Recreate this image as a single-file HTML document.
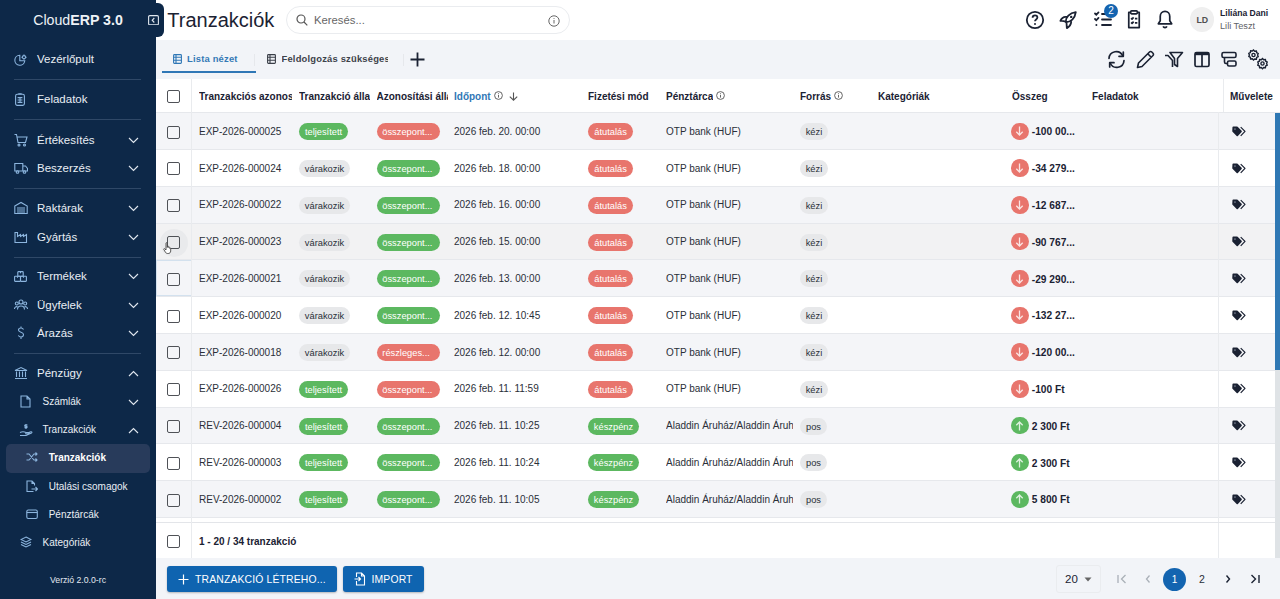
<!DOCTYPE html>
<html><head><meta charset="utf-8">
<style>
*{box-sizing:border-box;margin:0;padding:0}
html,body{width:1280px;height:599px;overflow:hidden;background:#f2f4f8;font-family:"Liberation Sans",sans-serif;color:#1b2233}
.abs{position:absolute}
#sb{position:absolute;left:0;top:0;width:156px;height:599px;background:#0d2848;color:#e9eef4}
#sb .it{position:absolute;left:0;width:156px;height:20px;line-height:20px;font-size:11.5px;white-space:nowrap}
#sb .it .tx{position:absolute;left:37px;top:0}
#sb .it svg.i{position:absolute;left:14px;top:3px}
#sb .it svg.ch{position:absolute;left:128px;top:7px}
#sb .sub{font-size:10px}
#sb .dv{position:absolute;left:14px;width:127px;height:1px;background:#2f4867}
#hdr{position:absolute;left:156px;top:0;width:1124px;height:40px;background:#ffffff}
#tabs{position:absolute;left:156px;top:40px;width:1124px;height:39px;background:#f2f4f8}
#tbl{position:absolute;left:156px;top:79px;width:1124px;height:479px;background:#fff;overflow:hidden}
.row{position:absolute;left:0;width:1124px;height:36.8px;border-bottom:1px solid #e6e8ec}
.row .c{position:absolute;top:0.5px;line-height:36px;font-size:10px;color:#2a2f38;white-space:nowrap;overflow:hidden}
.cb{position:absolute;top:12.4px;width:13px;height:13px;border:1.8px solid #4f5257;border-radius:2px}
.pill{position:absolute;top:10px;height:17px;line-height:18.6px;border-radius:9px;font-size:9.3px;text-align:center;white-space:nowrap;overflow:hidden;color:#fff;padding:0 5px;text-overflow:ellipsis}
.pg{background:#5cb860}
.pr{background:#e8756d}
.pgr{background:#e7e8ea;color:#2a2f38}
.pl{text-align:left;padding:0 4px 0 5.5px}
.amtc{position:absolute;top:9.4px;width:17.5px;height:17.5px;border-radius:50%;display:flex;align-items:center;justify-content:center}
.amt{position:absolute;top:0.2px;line-height:37px;font-size:10.2px;font-weight:bold;color:#1b2233;white-space:nowrap}
.tag{position:absolute;top:12.7px;line-height:0}
.hd{position:absolute;top:0.8px;height:33.4px;line-height:34px;font-size:10px;font-weight:bold;color:#1b2233;white-space:nowrap;overflow:hidden}
#bot{position:absolute;left:156px;top:558px;width:1124px;height:41px;background:#f2f4f8}
.btn{position:absolute;top:8.2px;height:26px;background:#0f64b0;border-radius:3px;color:#fff;font-size:10.4px;line-height:28px;letter-spacing:0.15px;white-space:nowrap;box-shadow:0 1px 2px rgba(0,0,0,.25)}
</style></head><body>

<div id="sb">
  <div class="abs" style="left:0;top:10px;width:156px;text-align:center;font-size:14.2px;line-height:20px;color:#eef2f6">Cloud<b>ERP 3.0</b></div>
  <div class="it" style="top:48.8px"><svg class="i" style="left:14px;top:5px" width="13" height="12" viewBox="0 0 13 12"><g fill="none" stroke="#8cb5de" stroke-width="1.1"><path d="M5.8 1.2A5 5 0 1 0 10.8 6.8H5.8Z"/><circle cx="10" cy="3.2" r="1.6"/><path d="M10 0.6v.9M10 4.9v.9M7.4 3.2h.9M11.7 3.2h.9"/></g></svg><span class="tx">Vezérlőpult</span></div>
  <div class="dv" style="top:79px"></div>
  <div class="it" style="top:88.8px"><svg class="i" style="left:15px;top:4.6px" width="10" height="13" viewBox="0 0 10 13"><g fill="none" stroke="#8cb5de" stroke-width="1.1"><rect x="0.6" y="1.3" width="8.8" height="11.1" rx="1.6"/><path d="M3.3 0.8h3.4M2.6 4.6h4.8M2.6 7h4.8M2.6 9.4h4.8M5 4.6v4.8"/></g></svg><span class="tx">Feladatok</span></div>
  <div class="dv" style="top:119px"></div>
  <div class="it" style="top:129.7px"><svg class="i" width="14" height="14" viewBox="0 0 14 14"><g fill="none" stroke="#8cb5de" stroke-width="1.1"><path d="M0.5 1.5h2l1.5 8h7.5l1.5-5.5H3.2"/><circle cx="5" cy="12" r="1"/><circle cx="10.5" cy="12" r="1"/></g></svg><span class="tx">Értékesítés</span><svg class="ch" width="11" height="7" viewBox="0 0 11 7"><path d="M1 1l4.5 4.5L10 1" fill="none" stroke="#dfe6ee" stroke-width="1.15"/></svg></div>
  <div class="it" style="top:158px"><svg class="i" width="14" height="14" viewBox="0 0 14 14"><g fill="none" stroke="#8cb5de" stroke-width="1.1"><path d="M0.8 2.5h8v7.5h-8z M8.8 5h2.7l2 2.5v2.5h-4.7"/><circle cx="3.5" cy="11" r="1.3"/><circle cx="10.5" cy="11" r="1.3"/></g></svg><span class="tx">Beszerzés</span><svg class="ch" width="11" height="7" viewBox="0 0 11 7"><path d="M1 1l4.5 4.5L10 1" fill="none" stroke="#dfe6ee" stroke-width="1.15"/></svg></div>
  <div class="dv" style="top:188px"></div>
  <div class="it" style="top:198px"><svg class="i" width="14" height="14" viewBox="0 0 14 14"><g fill="none" stroke="#8cb5de" stroke-width="1.1"><path d="M0.8 5L7 1.5L13.2 5V12.5H0.8Z"/><path d="M3 7h8M3 9h8M3 11h8"/></g></svg><span class="tx">Raktárak</span><svg class="ch" width="11" height="7" viewBox="0 0 11 7"><path d="M1 1l4.5 4.5L10 1" fill="none" stroke="#dfe6ee" stroke-width="1.15"/></svg></div>
  <div class="it" style="top:226.5px"><svg class="i" width="14" height="14" viewBox="0 0 14 14"><g fill="none" stroke="#8cb5de" stroke-width="1.1"><path d="M1 12.5V2.5h2.5v4l3-2v2l3-2v2l3-2v8z"/></g></svg><span class="tx">Gyártás</span><svg class="ch" width="11" height="7" viewBox="0 0 11 7"><path d="M1 1l4.5 4.5L10 1" fill="none" stroke="#dfe6ee" stroke-width="1.15"/></svg></div>
  <div class="dv" style="top:256.5px"></div>
  <div class="it" style="top:266px"><svg class="i" style="left:14px;top:5px" width="13" height="11" viewBox="0 0 13 11"><g fill="none" stroke="#8cb5de" stroke-width="1.1"><rect x="3.8" y="0.6" width="5.4" height="4.6" rx="0.6"/><rect x="0.6" y="5.2" width="5.9" height="5.2" rx="0.6"/><rect x="6.5" y="5.2" width="5.9" height="5.2" rx="0.6"/><path d="M6.5 0.6v1.6M3.5 5.2v1.6M9.5 5.2v1.6"/></g></svg><span class="tx">Termékek</span><svg class="ch" width="11" height="7" viewBox="0 0 11 7"><path d="M1 1l4.5 4.5L10 1" fill="none" stroke="#dfe6ee" stroke-width="1.15"/></svg></div>
  <div class="it" style="top:294.5px"><svg class="i" width="14" height="14" viewBox="0 0 14 14"><g fill="none" stroke="#8cb5de" stroke-width="1.1"><circle cx="7" cy="4" r="2"/><circle cx="2.8" cy="5.5" r="1.5"/><circle cx="11.2" cy="5.5" r="1.5"/><path d="M3.5 11.5a3.5 3.5 0 0 1 7 0M0.5 11a2.3 2.3 0 0 1 3-2.3M13.5 11a2.3 2.3 0 0 0-3-2.3"/></g></svg><span class="tx">Ügyfelek</span><svg class="ch" width="11" height="7" viewBox="0 0 11 7"><path d="M1 1l4.5 4.5L10 1" fill="none" stroke="#dfe6ee" stroke-width="1.15"/></svg></div>
  <div class="it" style="top:323px"><svg class="i" width="14" height="14" viewBox="0 0 14 14"><g fill="none" stroke="#8cb5de" stroke-width="1.1"><path d="M9.5 3.5C9 2.5 8 2 7 2 5.5 2 4.5 2.8 4.5 4s1 1.7 2.5 2.2 2.5 1 2.5 2.3S8.5 11 7 11c-1.2 0-2.2-.6-2.6-1.6M7 0.5v1.5M7 11v2"/></g></svg><span class="tx">Árazás</span><svg class="ch" width="11" height="7" viewBox="0 0 11 7"><path d="M1 1l4.5 4.5L10 1" fill="none" stroke="#dfe6ee" stroke-width="1.15"/></svg></div>
  <div class="dv" style="top:353px"></div>
  <div class="it" style="top:362.5px"><svg class="i" width="14" height="14" viewBox="0 0 14 14"><g fill="none" stroke="#8cb5de" stroke-width="1.1"><path d="M1 4.5L7 1.5L13 4.5H1z M2.5 5.5v5.5 M5.5 5.5v5.5 M8.5 5.5v5.5 M11.5 5.5v5.5 M1 12.5h12"/></g></svg><span class="tx">Pénzügy</span><svg class="ch" width="11" height="7" viewBox="0 0 11 7"><path d="M1 6l4.5-4.5L10 6" fill="none" stroke="#dfe6ee" stroke-width="1.15"/></svg></div>
  <div class="it sub" style="top:391.5px"><svg class="i" style="left:20px" width="11" height="13" viewBox="0 0 11 13"><g fill="none" stroke="#8cb5de" stroke-width="1.1"><path d="M1 1h6l3 3v8H1z M7 1v3h3"/></g></svg><span class="tx" style="left:42.5px">Számlák</span><svg class="ch" width="11" height="7" viewBox="0 0 11 7"><path d="M1 1l4.5 4.5L10 1" fill="none" stroke="#dfe6ee" stroke-width="1.15"/></svg></div>
  <div class="it sub" style="top:419.5px"><svg class="i" style="left:19px" width="14" height="14" viewBox="0 0 14 14"><g fill="none" stroke="#8cb5de" stroke-width="1.1"><path d="M1 9.5c2-1 4-1 6 0h2.5c1 0 1 1.2 0 1.2H6 M1 12.5h6l5.5-2.5c.8-.5.3-1.5-.6-1.2L9 9.8 M7 1v5 M8.5 2H6.3c-.8 0-.8 1.3 0 1.3h1.2c.8 0 .8 1.3 0 1.3H5.5"/></g></svg><span class="tx" style="left:42.5px">Tranzakciók</span><svg class="ch" width="11" height="7" viewBox="0 0 11 7"><path d="M1 6l4.5-4.5L10 6" fill="none" stroke="#dfe6ee" stroke-width="1.15"/></svg></div>
  <div class="abs" style="left:6px;top:444px;width:144px;height:28.5px;background:#283b5b;border-radius:5px"></div>
  <div class="it sub" style="top:447.5px"><svg class="i" style="left:26px" width="12" height="12" viewBox="0 0 12 12"><g fill="none" stroke="#8cb5de" stroke-width="1.1"><path d="M0.5 3h2.5l5 6h3 M0.5 9h2.5l5-6h3 M9.5 1.5l1.5 1.5-1.5 1.5 M9.5 7.5l1.5 1.5-1.5 1.5"/></g></svg><span class="tx" style="left:48.7px;font-weight:bold;color:#fff">Tranzakciók</span></div>
  <div class="it sub" style="top:477.2px"><svg class="i" style="left:26px" width="12" height="13" viewBox="0 0 12 13"><g fill="none" stroke="#8cb5de" stroke-width="1.1"><path d="M7.5 11.5H1V1h5l2.5 2.5v2 M6 1v2.5h2.5 M5.5 9h6 M9.5 7l2 2-2 2"/></g></svg><span class="tx" style="left:48.7px">Utalási csomagok</span></div>
  <div class="it sub" style="top:505.3px"><svg class="i" style="left:26px" width="12" height="12" viewBox="0 0 12 12"><g fill="none" stroke="#8cb5de" stroke-width="1.1"><rect x="0.8" y="2" width="10.5" height="8.5" rx="1.5"/><path d="M0.8 4.5h10.5"/></g></svg><span class="tx" style="left:48.7px">Pénztárcák</span></div>
  <div class="it sub" style="top:533px"><svg class="i" style="left:20px" width="12" height="12" viewBox="0 0 12 12"><g fill="none" stroke="#8cb5de" stroke-width="1.1"><path d="M6 1L11 3.5L6 6L1 3.5Z M1 6l5 2.5L11 6 M1 8.5l5 2.5 5-2.5"/></g></svg><span class="tx" style="left:42.5px">Kategóriák</span></div>
  <div class="abs" style="left:0;top:573.5px;width:156px;text-align:center;font-size:8.7px;line-height:12px;color:#e4eaf1">Verzió 2.0.0-rc</div>
</div>

<!-- collapse tab -->
<div class="abs" style="left:140px;top:3px;width:24px;height:33.6px;background:#0d2848;border-radius:0 6px 6px 0;z-index:5"></div>
<svg class="abs" style="z-index:6;left:148px;top:14.5px" width="11" height="10.5" viewBox="0 0 11 10.5"><g fill="none" stroke="#dfe6ee" stroke-width="1.1"><rect x="0.6" y="0.6" width="9.8" height="9.3" rx="1.2"/><path d="M6.3 3L4.2 5.25 6.3 7.5"/></g></svg>

<div id="hdr">
  <div class="abs" style="left:11.3px;top:7.6px;font-size:20px;line-height:24px;color:#1b2233">Tranzakciók</div>
  <div class="abs" style="left:130px;top:6px;width:284px;height:28px;border:1px solid #eaecef;border-radius:14px;background:#fff"></div>
  <svg class="abs" style="left:140px;top:14px" width="12" height="12" viewBox="0 0 12 12"><g fill="none" stroke="#555" stroke-width="1.2"><circle cx="5" cy="5" r="4"/><path d="M8 8l3.3 3.3"/></g></svg>
  <div class="abs" style="left:158px;top:13px;font-size:11.3px;line-height:14px;color:#666">Keresés...</div>
  <svg class="abs" style="left:392px;top:14.7px" width="12" height="12" viewBox="0 0 12 12"><g fill="none" stroke="#666" stroke-width="1"><circle cx="6" cy="6" r="5.2"/><path d="M6 5v3.5M6 3.2v.8"/></g></svg>

  <!-- header right icons (page x - 156) -->
  <svg class="abs" style="left:869px;top:10px" width="20" height="20" viewBox="0 0 20 20"><g fill="none" stroke="#1b2233" stroke-width="1.8"><circle cx="10" cy="10" r="8.2"/><path d="M7.6 7.8c0-1.5 1.1-2.4 2.4-2.4s2.4.9 2.4 2.2c0 1.8-2.4 1.9-2.4 3.6"/></g><circle cx="10" cy="14" r="1" fill="#1b2233"/></svg>
  <svg class="abs" style="left:902px;top:10px" width="20" height="20" viewBox="0 0 20 20"><g fill="none" stroke="#1b2233" stroke-width="1.8" stroke-linejoin="round" stroke-linecap="round"><path d="M7.8 11.8C7.5 7.5 11.5 3 17.8 2.2 17 8.5 12.5 12.2 8.2 12.2Z"/><path d="M8.6 6.9C6 6.5 3.6 8 2.4 10.9 4.2 10.6 6 10.9 7.6 11.6"/><path d="M8.4 12.4C8.8 14.4 8.6 16.4 8.9 18.2 11.5 16.6 13 14.6 13.2 11.9"/></g><circle cx="13.2" cy="6.9" r="1.2" fill="#1b2233"/></svg>
  <svg class="abs" style="left:936.7px;top:9.3px" width="20" height="20" viewBox="0 0 20 20"><g fill="none" stroke="#1b2233" stroke-width="1.8" stroke-linecap="round"><path d="M2 4.5l1.3 1.3 2.2-2.4 M2 10l1.3 1.3 2.2-2.4"/><path d="M9 5h9 M9 10.5h9 M9 16h9"/></g><circle cx="3.4" cy="16" r="1" fill="#1b2233"/></svg>
  <div class="abs" style="left:948px;top:4.3px;width:14px;height:14px;border-radius:50%;background:#1464b0;color:#fff;font-size:10px;line-height:14px;text-align:center">2</div>
  <svg class="abs" style="left:968px;top:10px" width="20" height="20" viewBox="0 1 20 21"><g fill="none" stroke="#1b2233" stroke-width="1.8" stroke-linejoin="round"><path d="M6.5 3.5H4.5v16h11v-16h-2"/><rect x="6.5" y="2" width="7" height="3" rx="1"/><path d="M7 9.5l1 1 1.6-1.8 M7 14l1 1 1.6-1.8 M11 10h2.5 M11 14.5h2.5"/></g></svg>
  <svg class="abs" style="left:999px;top:10px" width="20" height="20" viewBox="0 1 20 21"><g fill="none" stroke="#1b2233" stroke-width="1.8" stroke-linejoin="round"><path d="M10 2.5c-3 0-5 2.3-5 5.3v4.5L3 15.5h14l-2-3.2V7.8c0-3-2-5.3-5-5.3z M8 18.2c.4.9 1.1 1.3 2 1.3s1.6-.4 2-1.3"/></g></svg>
  <div class="abs" style="left:1034.2px;top:7.4px;width:24.3px;height:24.3px;border-radius:50%;background:#efefef;color:#505050;font-size:8.8px;font-weight:bold;line-height:26.5px;text-align:center">LD</div>
  <div class="abs" style="left:1064px;top:6.5px;font-size:8.6px;font-weight:bold;line-height:12px;color:#1b2233;white-space:nowrap">Liliána Dani</div>
  <div class="abs" style="left:1064px;top:19.5px;font-size:9.2px;line-height:12px;color:#5f6368;white-space:nowrap">Lili Teszt</div>
</div>

<div id="tabs">
  <svg class="abs" style="left:17px;top:14px" width="9" height="10" viewBox="0 0 9 10"><g fill="none" stroke="#2f77b6" stroke-width="1.1"><rect x="0.6" y="0.6" width="7.8" height="8.8" rx="0.8"/><path d="M0.6 3.3h7.8M0.6 6.2h7.8M3 0.6v8.8"/></g></svg>
  <div class="abs" style="left:31px;top:12.3px;font-size:9.4px;letter-spacing:0.2px;font-weight:bold;line-height:14px;color:#3479b6;white-space:nowrap">Lista nézet</div>
  <div class="abs" style="left:5.5px;top:31px;width:94.5px;height:2px;background:#2f77b6"></div>
  <div class="abs" style="left:97.8px;top:14px;width:1px;height:11.5px;background:#e6e8ec"></div>
  <svg class="abs" style="left:111px;top:14px" width="9" height="10" viewBox="0 0 9 10"><g fill="none" stroke="#3a3f48" stroke-width="1.1"><rect x="0.6" y="0.6" width="7.8" height="8.8" rx="0.8"/><path d="M0.6 3.3h7.8M0.6 6.2h7.8M3 0.6v8.8"/></g></svg>
  <div class="abs" style="left:125.5px;top:12.3px;width:106.5px;overflow:hidden;font-size:9.4px;letter-spacing:0.2px;font-weight:bold;line-height:14px;color:#3d424a;white-space:nowrap">Feldolgozás szükséges</div>
  <div class="abs" style="left:247px;top:14px;width:1px;height:11.5px;background:#e6e8ec"></div>
  <svg class="abs" style="left:254px;top:12px" width="15" height="15" viewBox="0 0 15 15"><path d="M7.5 0.5v14M0.5 7.5h14" fill="none" stroke="#1b2233" stroke-width="1.8"/></svg>
  <!-- toolbar icons -->
  <svg class="abs" style="left:951px;top:10px" width="19" height="19" viewBox="0 0 19 19"><g fill="none" stroke="#1b2233" stroke-width="1.7" stroke-linecap="round" stroke-linejoin="round"><path d="M2 8.5A7.2 7.2 0 0 1 15.8 6 M17 10.5A7.2 7.2 0 0 1 3.2 13"/><path d="M16.3 2v4.3H12 M2.7 17v-4.3H7"/></g></svg>
  <svg class="abs" style="left:980px;top:10px" width="19" height="19" viewBox="0 0 19 19"><g fill="none" stroke="#1b2233" stroke-width="1.6" stroke-linejoin="round"><path d="M1.5 17.5l1-4.5L13.5 2a1.6 1.6 0 0 1 2.3 0l1.2 1.2a1.6 1.6 0 0 1 0 2.3L6 16.5z M11.8 3.8l3.4 3.4"/></g></svg>
  <svg class="abs" style="left:1008px;top:10px" width="20" height="19" viewBox="0 0 20 19"><g fill="none" stroke="#1b2233" stroke-width="1.6" stroke-linejoin="round"><path d="M6 2.5h12.5l-5 6v8l-3-2V8.5L6 2.5z"/><path d="M1 5.5h3l4.5 5v6.5"/></g></svg>
  <svg class="abs" style="left:1038px;top:11px" width="16" height="17" viewBox="0 0 16 17"><g fill="none" stroke="#1b2233" stroke-width="1.7"><rect x="1" y="1.5" width="14" height="14" rx="1.5"/><path d="M8 4v11.5"/></g><rect x="1" y="1.5" width="14" height="2.7" fill="#1b2233"/></svg>
  <svg class="abs" style="left:1065px;top:11px" width="16" height="17" viewBox="0 0 16 17"><g fill="none" stroke="#1b2233" stroke-width="1.6" stroke-linejoin="round"><rect x="1" y="1.5" width="14" height="5" rx="1.5"/><rect x="6.5" y="10" width="8.5" height="5" rx="1.5"/><path d="M3.5 6.5v4.5c0 .8.5 1.5 1.5 1.5h1.5"/></g></svg>
  <svg class="abs" style="left:1092px;top:9px" width="21" height="21" viewBox="0 0 21 21"><g fill="none" stroke="#1b2233" stroke-width="1.4"><path d="M5.5 1l1.2 1.2 1.7-.2.3 1.7 1.5.8-.6 1.6.6 1.6-1.5.8-.3 1.7-1.7-.2L5.5 11l-1.2-1.2-1.7.2-.3-1.7L.8 7.5l.6-1.6L.8 4.3l1.5-.8.3-1.7 1.7.2z"/><circle cx="5.5" cy="6" r="1.6"/><path d="M14.5 9.5l1.2 1.2 1.7-.2.3 1.7 1.5.8-.6 1.6.6 1.6-1.5.8-.3 1.7-1.7-.2-1.2 1.2-1.2-1.2-1.7.2-.3-1.7-1.5-.8.6-1.6-.6-1.6 1.5-.8.3-1.7 1.7.2z"/><circle cx="14.5" cy="14.5" r="1.6"/></g></svg>
</div>

<div id="tbl">
  <div class="abs" style="left:0;top:0;width:1124px;height:34.2px;background:#fff;border-bottom:1px solid #e6e8ec"></div>
  <span class="cb" style="left:11px;top:10.5px"></span>
    <div class="hd" style="left:43px;width:93px">Tranzakciós azonosító</div>
  <div class="hd" style="left:143px;width:71px">Tranzakció állapot</div>
  <div class="hd" style="left:220.5px;width:71px">Azonosítási állapot</div>
  <div class="hd" style="left:298px;color:#2f77b6">Időpont</div>
  <svg class="abs" style="left:338px;top:12px" width="9" height="9" viewBox="0 0 9 9"><g fill="none" stroke="#555" stroke-width="0.9"><circle cx="4.5" cy="4.5" r="3.9"/><path d="M4.5 3.8v2.8M4.5 2.3v.7"/></g></svg>
  <svg class="abs" style="left:352.5px;top:12.5px" width="9" height="9" viewBox="0 0 9 9"><path d="M4.5 0.5v7.6M0.8 4.6l3.7 3.6 3.7-3.6" fill="none" stroke="#555" stroke-width="1.1"/></svg>
  <div class="hd" style="left:432px">Fizetési mód</div>
  <div class="hd" style="left:510px">Pénztárca</div>
  <svg class="abs" style="left:560px;top:12px" width="9" height="9" viewBox="0 0 9 9"><g fill="none" stroke="#555" stroke-width="0.9"><circle cx="4.5" cy="4.5" r="3.9"/><path d="M4.5 3.8v2.8M4.5 2.3v.7"/></g></svg>
  <div class="hd" style="left:644px">Forrás</div>
  <svg class="abs" style="left:678px;top:12px" width="9" height="9" viewBox="0 0 9 9"><g fill="none" stroke="#555" stroke-width="0.9"><circle cx="4.5" cy="4.5" r="3.9"/><path d="M4.5 3.8v2.8M4.5 2.3v.7"/></g></svg>
  <div class="hd" style="left:722px">Kategóriák</div>
  <div class="hd" style="left:856px">Összeg</div>
  <div class="hd" style="left:936px">Feladatok</div>
  <div class="abs" style="left:1066.5px;top:0;width:1px;height:33.4px;background:#e9ebee"></div>
  <div class="hd" style="left:1074px;width:43px">Műveletek</div>
  <div class="row" style="top:34.20px;background:#f4f5f8"><span class="cb" style="left:11px"></span><span class="c" style="left:43px;width:93px">EXP-2026-000025</span><span class="pill pg" style="left:143px;width:49px">teljesített</span><span class="pill pr pl" style="left:220.8px;width:63.6px">összepont...</span><span class="c" style="left:298px;width:127px">2026 feb. 20. 00:00</span><span class="pill pr" style="left:432px;width:45px">átutalás</span><span class="c" style="left:510px;width:127px">OTP bank (HUF)</span><span class="pill pgr" style="left:644px;width:28px">kézi</span><span class="amtc" style="left:855px;background:#e8756d"><svg width="9" height="10" viewBox="0 0 9 10"><path d="M4.5 0.5V9M1.3 5.8L4.5 9L7.7 5.8" fill="none" stroke="#fff" stroke-opacity="0.8" stroke-width="1.3"/></svg></span><span class="amt" style="left:875.8px">-100 00...</span><span class="tag" style="left:1076px"><svg width="15" height="12" viewBox="0 0 15 12"><path d="M1.3 1.3H5L9 5.4 5.25 9.3 1.1 5.2Z" fill="#1b2233" stroke="#1b2233" stroke-width="1.7" stroke-linejoin="round"/><rect x="2.1" y="2.6" width="1.7" height="0.9" fill="#9aa3b3"/><path d="M8.7 1.1L13 5.4 8.7 9.9" fill="none" stroke="#1b2233" stroke-width="1.2" stroke-linejoin="round"/></svg></span></div>
<div class="row" style="top:71.00px;background:#ffffff"><span class="cb" style="left:11px"></span><span class="c" style="left:43px;width:93px">EXP-2026-000024</span><span class="pill pgr" style="left:143px;width:51px">várakozik</span><span class="pill pg pl" style="left:220.8px;width:63.6px">összepont...</span><span class="c" style="left:298px;width:127px">2026 feb. 18. 00:00</span><span class="pill pr" style="left:432px;width:45px">átutalás</span><span class="c" style="left:510px;width:127px">OTP bank (HUF)</span><span class="pill pgr" style="left:644px;width:28px">kézi</span><span class="amtc" style="left:855px;background:#e8756d"><svg width="9" height="10" viewBox="0 0 9 10"><path d="M4.5 0.5V9M1.3 5.8L4.5 9L7.7 5.8" fill="none" stroke="#fff" stroke-opacity="0.8" stroke-width="1.3"/></svg></span><span class="amt" style="left:875.8px">-34 279...</span><span class="tag" style="left:1076px"><svg width="15" height="12" viewBox="0 0 15 12"><path d="M1.3 1.3H5L9 5.4 5.25 9.3 1.1 5.2Z" fill="#1b2233" stroke="#1b2233" stroke-width="1.7" stroke-linejoin="round"/><rect x="2.1" y="2.6" width="1.7" height="0.9" fill="#9aa3b3"/><path d="M8.7 1.1L13 5.4 8.7 9.9" fill="none" stroke="#1b2233" stroke-width="1.2" stroke-linejoin="round"/></svg></span></div>
<div class="row" style="top:107.80px;background:#f4f5f8"><span class="cb" style="left:11px"></span><span class="c" style="left:43px;width:93px">EXP-2026-000022</span><span class="pill pgr" style="left:143px;width:51px">várakozik</span><span class="pill pg pl" style="left:220.8px;width:63.6px">összepont...</span><span class="c" style="left:298px;width:127px">2026 feb. 16. 00:00</span><span class="pill pr" style="left:432px;width:45px">átutalás</span><span class="c" style="left:510px;width:127px">OTP bank (HUF)</span><span class="pill pgr" style="left:644px;width:28px">kézi</span><span class="amtc" style="left:855px;background:#e8756d"><svg width="9" height="10" viewBox="0 0 9 10"><path d="M4.5 0.5V9M1.3 5.8L4.5 9L7.7 5.8" fill="none" stroke="#fff" stroke-opacity="0.8" stroke-width="1.3"/></svg></span><span class="amt" style="left:875.8px">-12 687...</span><span class="tag" style="left:1076px"><svg width="15" height="12" viewBox="0 0 15 12"><path d="M1.3 1.3H5L9 5.4 5.25 9.3 1.1 5.2Z" fill="#1b2233" stroke="#1b2233" stroke-width="1.7" stroke-linejoin="round"/><rect x="2.1" y="2.6" width="1.7" height="0.9" fill="#9aa3b3"/><path d="M8.7 1.1L13 5.4 8.7 9.9" fill="none" stroke="#1b2233" stroke-width="1.2" stroke-linejoin="round"/></svg></span></div>
<div class="row" style="top:144.60px;background:#f2f2f3"><span style="position:absolute;left:4px;top:5px;width:28px;height:28px;border-radius:50%;background:#e9eaec"></span><span class="cb" style="left:11px"></span><svg style="position:absolute;left:6.5px;top:18.5px" width="10" height="12" viewBox="0 0 10 12"><path d="M3 1.2c0-.7 1.2-.7 1.2 0V5.5l.3-1c.2-.6 1.1-.5 1.1.1v.9c.2-.6 1.1-.5 1.1.1v.8c.2-.5 1-.4 1 .2V9c0 1.5-1 2.5-2.5 2.5H4.5C3.5 11.5 3 11 2.5 10.3L.8 7.5c-.4-.6.4-1.2.9-.7L3 8z" fill="#fff" stroke="#333" stroke-width="0.8" stroke-linejoin="round"/></svg><span class="c" style="left:43px;width:93px">EXP-2026-000023</span><span class="pill pgr" style="left:143px;width:51px">várakozik</span><span class="pill pg pl" style="left:220.8px;width:63.6px">összepont...</span><span class="c" style="left:298px;width:127px">2026 feb. 15. 00:00</span><span class="pill pr" style="left:432px;width:45px">átutalás</span><span class="c" style="left:510px;width:127px">OTP bank (HUF)</span><span class="pill pgr" style="left:644px;width:28px">kézi</span><span class="amtc" style="left:855px;background:#e8756d"><svg width="9" height="10" viewBox="0 0 9 10"><path d="M4.5 0.5V9M1.3 5.8L4.5 9L7.7 5.8" fill="none" stroke="#fff" stroke-opacity="0.8" stroke-width="1.3"/></svg></span><span class="amt" style="left:875.8px">-90 767...</span><span class="tag" style="left:1076px"><svg width="15" height="12" viewBox="0 0 15 12"><path d="M1.3 1.3H5L9 5.4 5.25 9.3 1.1 5.2Z" fill="#1b2233" stroke="#1b2233" stroke-width="1.7" stroke-linejoin="round"/><rect x="2.1" y="2.6" width="1.7" height="0.9" fill="#9aa3b3"/><path d="M8.7 1.1L13 5.4 8.7 9.9" fill="none" stroke="#1b2233" stroke-width="1.2" stroke-linejoin="round"/></svg></span></div>
<div class="row" style="top:181.40px;background:#f4f5f8"><span style="position:absolute;left:0;top:0;width:35.5px;height:36px;border:1px solid #d3e1ee"></span><span class="cb" style="left:11px"></span><span class="c" style="left:43px;width:93px">EXP-2026-000021</span><span class="pill pgr" style="left:143px;width:51px">várakozik</span><span class="pill pg pl" style="left:220.8px;width:63.6px">összepont...</span><span class="c" style="left:298px;width:127px">2026 feb. 13. 00:00</span><span class="pill pr" style="left:432px;width:45px">átutalás</span><span class="c" style="left:510px;width:127px">OTP bank (HUF)</span><span class="pill pgr" style="left:644px;width:28px">kézi</span><span class="amtc" style="left:855px;background:#e8756d"><svg width="9" height="10" viewBox="0 0 9 10"><path d="M4.5 0.5V9M1.3 5.8L4.5 9L7.7 5.8" fill="none" stroke="#fff" stroke-opacity="0.8" stroke-width="1.3"/></svg></span><span class="amt" style="left:875.8px">-29 290...</span><span class="tag" style="left:1076px"><svg width="15" height="12" viewBox="0 0 15 12"><path d="M1.3 1.3H5L9 5.4 5.25 9.3 1.1 5.2Z" fill="#1b2233" stroke="#1b2233" stroke-width="1.7" stroke-linejoin="round"/><rect x="2.1" y="2.6" width="1.7" height="0.9" fill="#9aa3b3"/><path d="M8.7 1.1L13 5.4 8.7 9.9" fill="none" stroke="#1b2233" stroke-width="1.2" stroke-linejoin="round"/></svg></span></div>
<div class="row" style="top:218.20px;background:#ffffff"><span class="cb" style="left:11px"></span><span class="c" style="left:43px;width:93px">EXP-2026-000020</span><span class="pill pgr" style="left:143px;width:51px">várakozik</span><span class="pill pg pl" style="left:220.8px;width:63.6px">összepont...</span><span class="c" style="left:298px;width:127px">2026 feb. 12. 10:45</span><span class="pill pr" style="left:432px;width:45px">átutalás</span><span class="c" style="left:510px;width:127px">OTP bank (HUF)</span><span class="pill pgr" style="left:644px;width:28px">kézi</span><span class="amtc" style="left:855px;background:#e8756d"><svg width="9" height="10" viewBox="0 0 9 10"><path d="M4.5 0.5V9M1.3 5.8L4.5 9L7.7 5.8" fill="none" stroke="#fff" stroke-opacity="0.8" stroke-width="1.3"/></svg></span><span class="amt" style="left:875.8px">-132 27...</span><span class="tag" style="left:1076px"><svg width="15" height="12" viewBox="0 0 15 12"><path d="M1.3 1.3H5L9 5.4 5.25 9.3 1.1 5.2Z" fill="#1b2233" stroke="#1b2233" stroke-width="1.7" stroke-linejoin="round"/><rect x="2.1" y="2.6" width="1.7" height="0.9" fill="#9aa3b3"/><path d="M8.7 1.1L13 5.4 8.7 9.9" fill="none" stroke="#1b2233" stroke-width="1.2" stroke-linejoin="round"/></svg></span></div>
<div class="row" style="top:255.00px;background:#f4f5f8"><span class="cb" style="left:11px"></span><span class="c" style="left:43px;width:93px">EXP-2026-000018</span><span class="pill pgr" style="left:143px;width:51px">várakozik</span><span class="pill pr pl" style="left:220.8px;width:63.6px">részleges...</span><span class="c" style="left:298px;width:127px">2026 feb. 12. 00:00</span><span class="pill pr" style="left:432px;width:45px">átutalás</span><span class="c" style="left:510px;width:127px">OTP bank (HUF)</span><span class="pill pgr" style="left:644px;width:28px">kézi</span><span class="amtc" style="left:855px;background:#e8756d"><svg width="9" height="10" viewBox="0 0 9 10"><path d="M4.5 0.5V9M1.3 5.8L4.5 9L7.7 5.8" fill="none" stroke="#fff" stroke-opacity="0.8" stroke-width="1.3"/></svg></span><span class="amt" style="left:875.8px">-120 00...</span><span class="tag" style="left:1076px"><svg width="15" height="12" viewBox="0 0 15 12"><path d="M1.3 1.3H5L9 5.4 5.25 9.3 1.1 5.2Z" fill="#1b2233" stroke="#1b2233" stroke-width="1.7" stroke-linejoin="round"/><rect x="2.1" y="2.6" width="1.7" height="0.9" fill="#9aa3b3"/><path d="M8.7 1.1L13 5.4 8.7 9.9" fill="none" stroke="#1b2233" stroke-width="1.2" stroke-linejoin="round"/></svg></span></div>
<div class="row" style="top:291.80px;background:#ffffff"><span class="cb" style="left:11px"></span><span class="c" style="left:43px;width:93px">EXP-2026-000026</span><span class="pill pg" style="left:143px;width:49px">teljesített</span><span class="pill pr pl" style="left:220.8px;width:63.6px">összepont...</span><span class="c" style="left:298px;width:127px">2026 feb. 11. 11:59</span><span class="pill pr" style="left:432px;width:45px">átutalás</span><span class="c" style="left:510px;width:127px">OTP bank (HUF)</span><span class="pill pgr" style="left:644px;width:28px">kézi</span><span class="amtc" style="left:855px;background:#e8756d"><svg width="9" height="10" viewBox="0 0 9 10"><path d="M4.5 0.5V9M1.3 5.8L4.5 9L7.7 5.8" fill="none" stroke="#fff" stroke-opacity="0.8" stroke-width="1.3"/></svg></span><span class="amt" style="left:875.8px">-100 Ft</span><span class="tag" style="left:1076px"><svg width="15" height="12" viewBox="0 0 15 12"><path d="M1.3 1.3H5L9 5.4 5.25 9.3 1.1 5.2Z" fill="#1b2233" stroke="#1b2233" stroke-width="1.7" stroke-linejoin="round"/><rect x="2.1" y="2.6" width="1.7" height="0.9" fill="#9aa3b3"/><path d="M8.7 1.1L13 5.4 8.7 9.9" fill="none" stroke="#1b2233" stroke-width="1.2" stroke-linejoin="round"/></svg></span></div>
<div class="row" style="top:328.60px;background:#f4f5f8"><span class="cb" style="left:11px"></span><span class="c" style="left:43px;width:93px">REV-2026-000004</span><span class="pill pg" style="left:143px;width:49px">teljesített</span><span class="pill pg pl" style="left:220.8px;width:63.6px">összepont...</span><span class="c" style="left:298px;width:127px">2026 feb. 11. 10:25</span><span class="pill pg" style="left:432px;width:51px">készpénz</span><span class="c" style="left:510px;width:127px">Aladdin Áruház/Aladdin Áruház</span><span class="pill pgr" style="left:644px;width:27px">pos</span><span class="amtc" style="left:855px;background:#5cb860"><svg width="9" height="10" viewBox="0 0 9 10"><path d="M4.5 9.5V1M1.3 4.2L4.5 1L7.7 4.2" fill="none" stroke="#fff" stroke-opacity="0.8" stroke-width="1.3"/></svg></span><span class="amt" style="left:875.8px">2 300 Ft</span><span class="tag" style="left:1076px"><svg width="15" height="12" viewBox="0 0 15 12"><path d="M1.3 1.3H5L9 5.4 5.25 9.3 1.1 5.2Z" fill="#1b2233" stroke="#1b2233" stroke-width="1.7" stroke-linejoin="round"/><rect x="2.1" y="2.6" width="1.7" height="0.9" fill="#9aa3b3"/><path d="M8.7 1.1L13 5.4 8.7 9.9" fill="none" stroke="#1b2233" stroke-width="1.2" stroke-linejoin="round"/></svg></span></div>
<div class="row" style="top:365.40px;background:#ffffff"><span class="cb" style="left:11px"></span><span class="c" style="left:43px;width:93px">REV-2026-000003</span><span class="pill pg" style="left:143px;width:49px">teljesített</span><span class="pill pg pl" style="left:220.8px;width:63.6px">összepont...</span><span class="c" style="left:298px;width:127px">2026 feb. 11. 10:24</span><span class="pill pg" style="left:432px;width:51px">készpénz</span><span class="c" style="left:510px;width:127px">Aladdin Áruház/Aladdin Áruház</span><span class="pill pgr" style="left:644px;width:27px">pos</span><span class="amtc" style="left:855px;background:#5cb860"><svg width="9" height="10" viewBox="0 0 9 10"><path d="M4.5 9.5V1M1.3 4.2L4.5 1L7.7 4.2" fill="none" stroke="#fff" stroke-opacity="0.8" stroke-width="1.3"/></svg></span><span class="amt" style="left:875.8px">2 300 Ft</span><span class="tag" style="left:1076px"><svg width="15" height="12" viewBox="0 0 15 12"><path d="M1.3 1.3H5L9 5.4 5.25 9.3 1.1 5.2Z" fill="#1b2233" stroke="#1b2233" stroke-width="1.7" stroke-linejoin="round"/><rect x="2.1" y="2.6" width="1.7" height="0.9" fill="#9aa3b3"/><path d="M8.7 1.1L13 5.4 8.7 9.9" fill="none" stroke="#1b2233" stroke-width="1.2" stroke-linejoin="round"/></svg></span></div>
<div class="row" style="top:402.20px;background:#f4f5f8"><span class="cb" style="left:11px"></span><span class="c" style="left:43px;width:93px">REV-2026-000002</span><span class="pill pg" style="left:143px;width:49px">teljesített</span><span class="pill pg pl" style="left:220.8px;width:63.6px">összepont...</span><span class="c" style="left:298px;width:127px">2026 feb. 11. 10:05</span><span class="pill pg" style="left:432px;width:51px">készpénz</span><span class="c" style="left:510px;width:127px">Aladdin Áruház/Aladdin Áruház</span><span class="pill pgr" style="left:644px;width:27px">pos</span><span class="amtc" style="left:855px;background:#5cb860"><svg width="9" height="10" viewBox="0 0 9 10"><path d="M4.5 9.5V1M1.3 4.2L4.5 1L7.7 4.2" fill="none" stroke="#fff" stroke-opacity="0.8" stroke-width="1.3"/></svg></span><span class="amt" style="left:875.8px">5 800 Ft</span><span class="tag" style="left:1076px"><svg width="15" height="12" viewBox="0 0 15 12"><path d="M1.3 1.3H5L9 5.4 5.25 9.3 1.1 5.2Z" fill="#1b2233" stroke="#1b2233" stroke-width="1.7" stroke-linejoin="round"/><rect x="2.1" y="2.6" width="1.7" height="0.9" fill="#9aa3b3"/><path d="M8.7 1.1L13 5.4 8.7 9.9" fill="none" stroke="#1b2233" stroke-width="1.2" stroke-linejoin="round"/></svg></span></div>
  <div class="abs" style="left:0;top:439px;width:1124px;height:5px;background:#fff;border-bottom:1px solid #e3e5e9"></div>
  <div class="abs" style="left:0;top:444px;width:1124px;height:35px;background:#fff"></div>
  <div class="abs" style="left:35px;top:0;width:1px;height:479px;background:#e9ebee"></div>
  <span class="cb" style="left:11px;top:455.5px"></span>
  <div class="abs" style="left:43px;top:455.5px;font-size:10px;font-weight:bold;line-height:14px;color:#1b2233;white-space:nowrap">1 - 20 / 34 tranzakció</div>
  <div class="abs" style="left:1062px;top:33.4px;width:1px;height:410px;background:#e9ebee"></div>
  <div class="abs" style="left:1062px;top:444px;width:1px;height:35px;background:#e9ebee"></div>
  <div class="abs" style="left:1119px;top:34.4px;width:5px;height:257px;background:#2f78b4"></div>
  <div class="abs" style="left:1119px;top:291px;width:5px;height:188px;background:#dfe3e6"></div>
</div>

<div id="bot">
  <div class="btn" style="left:11px;width:170px"><svg class="abs" style="left:11px;top:7.5px" width="11" height="11" viewBox="0 0 11 11"><path d="M5.5 0.5v10M0.5 5.5h10" fill="none" stroke="#fff" stroke-width="1.2"/></svg><span class="abs" style="left:28px;top:0">TRANZAKCIÓ LÉTREHO...</span></div>
  <div class="btn" style="left:186.5px;width:81px"><svg class="abs" style="left:11px;top:6px" width="12" height="14" viewBox="0 0 12 14"><g fill="none" stroke="#fff" stroke-width="1.1"><path d="M2.5 5V1h5l3 3v9H2.5v-4 M7.5 1v3h3 M0.5 7h6 M4.5 5l2 2-2 2"/></g></svg><span class="abs" style="left:29px;top:0">IMPORT</span></div>
  <div class="abs" style="left:900px;top:7px;width:45px;height:28px;border:1px solid #eaecef;border-radius:3px"></div>
  <div class="abs" style="left:909px;top:14px;font-size:11.5px;line-height:14px;color:#1b2233">20</div>
  <svg class="abs" style="left:928px;top:19px" width="8" height="5" viewBox="0 0 8 5"><path d="M0.5 0.5h7L4 4.5z" fill="#666"/></svg>
  <svg class="abs" style="left:961px;top:16px" width="10" height="10" viewBox="0 0 10 10"><path d="M1 1v8 M8.5 1L4.5 5l4 4" fill="none" stroke="#aab0b8" stroke-width="1.3"/></svg>
  <svg class="abs" style="left:988px;top:16px" width="8" height="10" viewBox="0 0 8 10"><path d="M5.5 1.5L2.5 5l3 3.5" fill="none" stroke="#aab0b8" stroke-width="1.3"/></svg>
  <div class="abs" style="left:1007px;top:9.7px;width:23px;height:23px;border-radius:50%;background:#1364b0;color:#fff;font-size:10px;line-height:23px;text-align:center">1</div>
  <div class="abs" style="left:1043px;top:13.5px;font-size:10.5px;line-height:14px;color:#2a2f38">2</div>
  <svg class="abs" style="left:1068px;top:16px" width="8" height="10" viewBox="0 0 8 10"><path d="M2.5 1.5L5.5 5l-3 3.5" fill="none" stroke="#1b2233" stroke-width="1.4"/></svg>
  <svg class="abs" style="left:1094px;top:16px" width="10" height="10" viewBox="0 0 10 10"><path d="M9 1v8 M1.5 1l4 4-4 4" fill="none" stroke="#1b2233" stroke-width="1.4"/></svg>
</div>

</body></html>
